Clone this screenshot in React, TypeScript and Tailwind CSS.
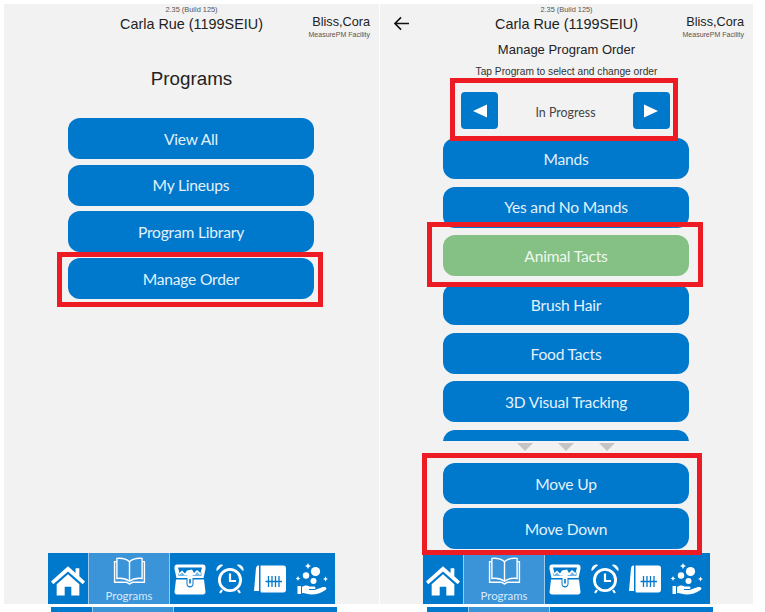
import React from 'react';

const sans = "font-['Liberation_Sans',Arial,sans-serif]";
const soft = "font-['Lato','Noto_Sans',sans-serif]";

function HomeIcon() {
  return (
    <svg viewBox="0 0 36 32" className="w-[34px] h-[31px]" fill="#fff">
      <path d="M18 1 L26 8 V3 H30 V11.5 L36 17 L33.6 20 L18 6.5 L2.4 20 L0 17 Z" />
      <path d="M6 20 L18 9.5 L30 20 V32 H21.5 V22.5 H14.5 V32 H6 Z" />
    </svg>
  );
}

function BookIcon() {
  return (
    <svg viewBox="0 0 34 30" className="w-[33px] h-[29px]" fill="none" stroke="#fff" strokeWidth="1.5">
      <path d="M17 5 C13 1.5 8 1 3.5 1.5 V23 C8 22.5 13 23 17 26 C21 23 26 22.5 30.5 23 V1.5 C26 1 21 1.5 17 5 Z" />
      <path d="M17 5 V26" />
      <path d="M3.5 5 H1 V27 H13 C15 27 16 28.5 17 29 C18 28.5 19 27 21 27 H33 V5 H30.5" />
    </svg>
  );
}

function ChestIcon() {
  return (
    <svg viewBox="0 0 32 31" className="w-[32px] h-[31px]" fill="#fff">
      {/* lid */}
      <path d="M3 0.5 H29 C30.5 0.5 31.5 1.5 31.5 3 V5 L29.5 14 H2.5 L0.5 5 V3 C0.5 1.5 1.5 0.5 3 0.5 Z" />
      <path d="M4 3.5 H28 L26.5 9 L23 6 L20 9 L18 5.5 L13 6.5 L11 9.5 L8 6.5 L5.5 9 Z" fill="#0078cc" />
      <path d="M3.5 8 L5.5 11 L8 8.5 L11 11.5 L21 11 L23 8 L26 11 L28 7.5 L27.5 12 H4.5 Z" fill="#0078cc" opacity="0.55" />
      {/* body */}
      <path d="M2 15.5 H12.5 V20 C12.5 22 14.2 23.5 16 23.5 C17.8 23.5 19.5 22 19.5 20 V15.5 H30 L31.5 28 C31.5 29.5 30.5 30.5 29 30.5 H3 C1.5 30.5 0.5 29.5 0.5 28 Z" />
      {/* lock */}
      <path d="M13.5 11 H18.5 V20 C18.5 23 13.5 23 13.5 20 Z" />
      <path d="M15.2 15 H16.8 V19.5 H15.2 Z" fill="#0078cc" />
    </svg>
  );
}

function ClockIcon() {
  return (
    <svg viewBox="0 0 28 30" className="w-[28px] h-[30px]" fill="none" stroke="#fff">
      <circle cx="14" cy="16" r="10.6" strokeWidth="2.8" />
      <path d="M14 9.5 V17 H20" strokeWidth="2.2" />
      <path d="M1 6.5 C0.5 3 3 0.6 6.5 1 Z M27 6.5 C27.5 3 25 0.6 21.5 1 Z" fill="#fff" strokeWidth="1" />
      <path d="M6 26 L4 29 M22 26 L24 29" strokeWidth="2.2" />
    </svg>
  );
}

function CalendarIcon() {
  return (
    <svg viewBox="0 0 32 28" className="w-[32px] h-[28px]" fill="#fff">
      <path d="M0 26 L2 3 C2.5 1 3.5 0.5 5 0.5 V26 Z" />
      <path d="M6.5 0.5 H29.5 C31 0.5 32 1.5 32 3 V25 C32 26.5 31 27.5 29.5 27.5 H8 C7 27.5 6.5 27 6.5 26 Z" />
      <g stroke="#0078cc" strokeWidth="1.3">
        <path d="M14.5 11 V22 M18 11 V22 M21.5 11 V22 M25 11 V22 M11.5 16.5 H28" />
      </g>
    </svg>
  );
}

function HandIcon() {
  return (
    <svg viewBox="0 0 32 32" className="w-[32px] h-[32px]" fill="#fff">
      <circle cx="19.5" cy="8.5" r="4.6" />
      <circle cx="10" cy="12.5" r="3.2" />
      <circle cx="17.5" cy="18" r="3" />
      <path d="M12 0 L13 2 L15 3 L13 4 L12 6 L11 4 L9 3 L11 2 Z" />
      <path d="M29.5 13.5 L30.3 15.2 L32 16 L30.3 16.8 L29.5 18.5 L28.7 16.8 L27 16 L28.7 15.2 Z" />
      <path d="M2 13 L2.8 14.7 L4.5 15.5 L2.8 16.3 L2 18 L1.2 16.3 L-0.5 15.5 L1.2 14.7 Z" />
      <path d="M1.5 23 H5 V31 H1.5 Z" />
      <path d="M6 24 C8.5 22 11.5 22 13.5 23.5 H18 C20 23.5 20 26 18 26 H13 V27 H18.5 L27 24 C30 23.5 31.5 25.5 29.5 27 C25 30 20.5 31.5 15.5 31.5 C12 31.5 9.5 30 6 30 Z" />
    </svg>
  );
}

function NavBar() {
  return (
    <div className="flex h-[51px] w-[287px] bg-[#0078cc]">
      <div className="w-[41px] flex items-center justify-center border-r border-r-[#9cc9ec] pt-[3px]">
        <HomeIcon />
      </div>
      <div className={`w-[81px] bg-[#3b93d8] border-r border-r-[#9cc9ec] flex flex-col items-center pt-[4px] text-[#d6eafa] text-[11.4px] leading-[16px] ${soft}`}>
        <BookIcon />
        <span className="mt-[3px]">Programs</span>
      </div>
      <div className="flex-1 flex items-center pl-[4px] gap-[10px] pt-[1px]">
        <ChestIcon />
        <ClockIcon />
        <CalendarIcon />
        <HandIcon />
      </div>
    </div>
  );
}

function Strip() {
  return (
    <div className="flex h-[5px] w-[286px] mt-[3px] ml-[3px] bg-[#0078cc]">
      <div className="w-[42px] border-r border-r-[#9cc9ec]" />
      <div className="w-[81px] bg-[#3b93d8] border-r border-r-[#9cc9ec]" />
    </div>
  );
}

function Header({ back }: { back?: boolean }) {
  return (
    <div className={`relative h-[38px] ${sans}`}>
      <div className="text-center text-[7.4px] leading-[10px] pt-[1px] text-[#555]">2.35 (Build 125)</div>
      <div className="text-center text-[14.4px] leading-[20px] text-[#222] -mt-[1px]">Carla Rue (1199SEIU)</div>
      {back && (
        <svg viewBox="0 0 18 16" className="absolute left-[13px] top-[12px] w-[17px] h-[15px]" fill="none" stroke="#111" strokeWidth="1.7">
          <path d="M17 8 H2 M8.5 1.5 L2 8 L8.5 14.5" />
        </svg>
      )}
      <div className="absolute right-[9px] top-[9.5px] text-right">
        <div className="text-[12.7px] leading-[16px] text-[#222]">Bliss,Cora</div>
        <div className="text-[7px] leading-[8px] mt-[1px] text-[#555]">MeasurePM Facility</div>
      </div>
    </div>
  );
}

function Pill({ label, green }: { label: string; green?: boolean }) {
  return (
    <div className={`w-[246px] h-[41px] shrink-0 rounded-[12px] flex items-center justify-center text-[15.6px] tracking-[-0.2px] pt-[2px] ${soft} ${green ? 'bg-[#85c085] text-[#eef7ee]' : 'bg-[#0078cc] text-[#e3f1fb]'}`}>
      {label}
    </div>
  );
}

function Square({ dir }: { dir: 'left' | 'right' }) {
  return (
    <div className="w-[37px] h-[37px] rounded-[4px] bg-[#0078cc] flex items-center justify-center">
      <svg viewBox="0 0 14 14" className="w-[14px] h-[14px]" fill="#fff">
        <path d={dir === 'left' ? 'M0 7 L14 0.5 V13.5 Z' : 'M14 7 L0 0.5 V13.5 Z'} />
      </svg>
    </div>
  );
}

function Caret() {
  return <div className="w-0 h-0 border-x-[8px] border-x-transparent border-t-[8px] border-t-[#c4c4c4]" />;
}

function RedBox({ className }: { className: string }) {
  return <div className={`absolute border-[5px] border-[#ed1c24] ${className}`} />;
}

function ProgramsPanel() {
  return (
    <div className="relative w-[375px] h-[600px] bg-[#f2f2f2] flex flex-col shrink-0">
      <Header />
      <h1 className={`text-center text-[18.8px] leading-[24px] text-[#222] mt-[25px] ${sans}`}>Programs</h1>
      <div className="flex flex-col gap-[5.7px] mt-[27px] ml-[64px] flex-1">
        <Pill label="View All" />
        <Pill label="My Lineups" />
        <Pill label="Program Library" />
        <Pill label="Manage Order" />
      </div>
      <div className="ml-[44px]">
        <NavBar />
      </div>
      <RedBox className="left-[53px] top-[248px] w-[266px] h-[55px]" />
    </div>
  );
}

function OrderPanel() {
  return (
    <div className="relative w-[373px] h-[600px] bg-[#f2f2f2] flex flex-col shrink-0">
      <Header back />
      <div className={`text-center text-[13px] leading-[18px] text-[#222] -mt-[1px] ${sans}`}>Manage Program Order</div>
      <div className={`text-center text-[10.2px] leading-[14px] text-[#333] mt-[5.5px] ${sans}`}>Tap Program to select and change order</div>
      <div className="flex items-center justify-between ml-[81px] w-[209px] mt-[8px] h-[48px]">
        <Square dir="left" />
        <span className={`text-[12.4px] text-[#444] pt-[5px] ${soft}`}>In Progress</span>
        <Square dir="right" />
      </div>
      <div className="ml-[63px] mt-[3.5px] h-[303px] overflow-hidden flex flex-col gap-[7.7px]">
        <Pill label="Mands" />
        <Pill label="Yes and No Mands" />
        <Pill label="Animal Tacts" green />
        <Pill label="Brush Hair" />
        <Pill label="Food Tacts" />
        <Pill label="3D Visual Tracking" />
        <Pill label="" />
      </div>
      <div className="flex justify-center gap-[25px] mt-[2px] pr-[2px]">
        <Caret />
        <Caret />
        <Caret />
      </div>
      <div className="ml-[63px] mt-[12px] flex flex-col gap-[4px]">
        <Pill label="Move Up" />
        <Pill label="Move Down" />
      </div>
      <div className="ml-[43px] mt-[4px]">
        <NavBar />
      </div>
      <RedBox className="left-[70px] top-[74px] w-[228px] h-[63px]" />
      <RedBox className="left-[47px] top-[218px] w-[276px] h-[65px]" />
      <RedBox className="left-[42px] top-[449px] w-[280px] h-[102px]" />
    </div>
  );
}

export default function App() {
  return (
    <div className="relative w-[765px] h-[612px] bg-white overflow-hidden">
      <div className="flex pt-[4px] pl-[4px] gap-px">
        <ProgramsPanel />
        <OrderPanel />
      </div>
      <div className="flex pl-[48px]">
        <div className="w-[375px]">
          <Strip />
        </div>
        <div className="ml-[1px]">
          <Strip />
        </div>
      </div>
    </div>
  );
}
